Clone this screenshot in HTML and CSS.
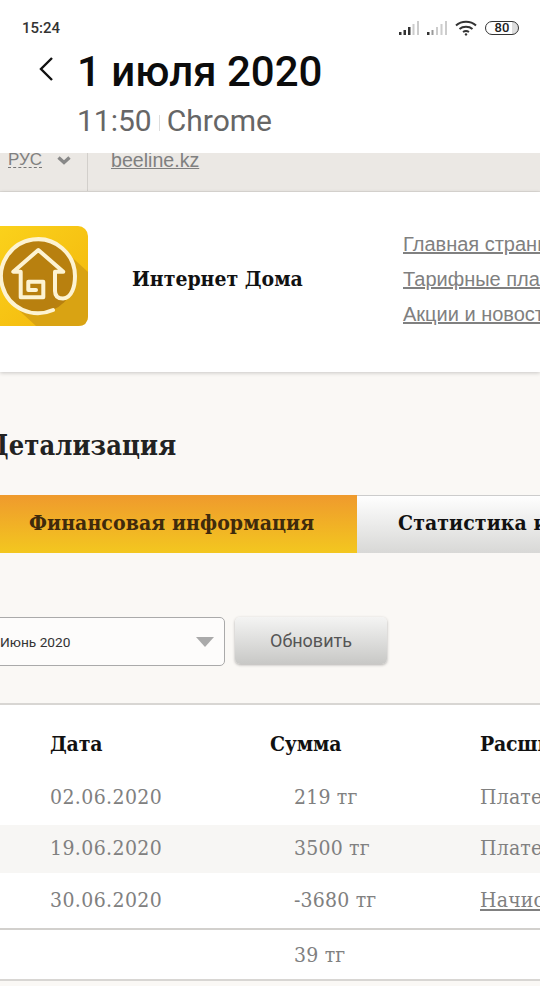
FILE: index.html
```html
<!DOCTYPE html>
<html lang="ru">
<head>
    <meta charset="UTF-8">
    <meta name="viewport" content="width=device-width, initial-scale=1.0">
    <title>Детализация</title>
    <link rel="stylesheet" href="styles.css">
</head>
<body>
    <div class="app-header">
        <div class="status-bar">
            <span class="status-time">15:24</span>
            <div class="status-icons">
                <svg width="20" height="16" viewBox="0 0 20 16"><rect x="0" y="12" width="2.5" height="3" fill="#333"/><rect x="4.5" y="10" width="2.5" height="5" fill="#333"/><rect x="9" y="7" width="2.5" height="8" fill="#333"/><rect x="13.5" y="4" width="2" height="11" fill="#ccc"/><rect x="18" y="1" width="2" height="14" fill="#ccc"/></svg>
                <svg width="20" height="16" viewBox="0 0 20 16"><rect x="0" y="12" width="2.5" height="3" fill="#333"/><rect x="4.5" y="10" width="2" height="5" fill="#999"/><rect x="9" y="7" width="2" height="8" fill="#ccc"/><rect x="13.5" y="4" width="2" height="11" fill="#ccc"/><rect x="18" y="1" width="2" height="14" fill="#ccc"/></svg>
                <svg width="22" height="16" viewBox="0 0 22 16" fill="none" stroke="#333" stroke-width="2"><path d="M1 5.5 C6.5 0.5 15.5 0.5 21 5.5"/><path d="M4.5 9 C8 6 14 6 17.5 9"/><path d="M8 12 C9.8 10.8 12.2 10.8 14 12"/><circle cx="11" cy="14.4" r="1.2" fill="#333" stroke="none"/></svg>
                <span class="battery">80</span>
            </div>
        </div>
        <div class="title-row">
            <svg class="back-icon" width="16" height="26" viewBox="0 0 16 26" fill="none" stroke="#111" stroke-width="2.4"><path d="M14 2 L3 13 L14 24"/></svg>
            <div>
                <h1>1 июля 2020</h1>
                <p class="subtitle">11:50<span class="sep"></span>Chrome</p>
            </div>
        </div>
    </div>

    <div class="top-bar">
        <div class="lang">
            <span class="lang-name">РУС</span>
            <svg width="14" height="9" viewBox="0 0 14 9" fill="none" stroke="#888" stroke-width="3.4"><path d="M1.5 1.5 L7 6.5 L12.5 1.5"/></svg>
        </div>
        <a class="site-link" href="#">beeline.kz</a>
    </div>

    <div class="site-header">
        <svg class="logo" width="100" height="100" viewBox="0 0 100 100">
            <defs>
                <linearGradient id="logoBg" x1="0" y1="0" x2="1" y2="1">
                    <stop offset="0" stop-color="#fbd31c"/>
                    <stop offset="1" stop-color="#f3b60c"/>
                </linearGradient>
            </defs>
            <rect width="100" height="100" rx="10" fill="url(#logoBg)"/>
            <path d="M76 24 L100 46 V90 Q100 100 90 100 H48 L22 76 Z" fill="#d9a313"/>
            <circle cx="50" cy="50" r="37" fill="#b8800f"/>
            <g fill="none" stroke="#fdf3d2" stroke-width="4" stroke-linejoin="round" stroke-linecap="round">
                <path d="M65 84 A37 37 0 1 1 87 50 C87 60 84 72 75 72.5 C70 72.5 67 70 67 65 V45.7 H75.3 L50.3 24 L25.3 45.7 H32.7 V71.3 H55.3 V55.7 H40.3 V64 H48"/>
            </g>
        </svg>
        <div class="site-name">Интернет Дома</div>
        <nav class="site-nav">
            <a href="#">Главная страница</a>
            <a href="#">Тарифные планы</a>
            <a href="#">Акции и новости</a>
        </nav>
    </div>

    <div class="content">
        <h2>Детализация</h2>
        <div class="tabs">
            <div class="tab tab-active">Финансовая информация</div>
            <div class="tab">Статистика использования</div>
        </div>
        <div class="filter">
            <div class="month-select">
                <span>Июнь 2020</span>
                <span class="select-arrow"></span>
            </div>
            <div class="refresh-btn">Обновить</div>
        </div>
    </div>

    <table class="details">
        <thead>
            <tr><th class="col-date">Дата</th><th class="col-sum">Сумма</th><th class="col-desc">Расшифровка</th></tr>
        </thead>
        <tbody>
            <tr><td class="col-date">02.06.2020</td><td class="col-sum amount">219 тг</td><td class="col-desc">Платеж</td></tr>
            <tr class="alt"><td class="col-date">19.06.2020</td><td class="col-sum amount">3500 тг</td><td class="col-desc">Платеж</td></tr>
            <tr><td class="col-date">30.06.2020</td><td class="col-sum amount">-3680 тг</td><td class="col-desc"><a href="#">Начисление</a></td></tr>
        </tbody>
        <tfoot>
            <tr><td class="col-date"></td><td class="col-sum amount">39 тг</td><td class="col-desc"></td></tr>
        </tfoot>
    </table>
</body>
</html>
```

FILE: styles.css
```css
html, body {
    margin: 0;
    padding: 0;
    height: 986px;
    overflow: hidden;
}

body {
    width: 540px;
    background: #faf8f5;
    font-family: "DejaVu Serif Condensed", "DejaVu Serif", serif;
}

.app-header {
    background: #fff;
    height: 153px;
    position: relative;
    z-index: 2;
    font-family: Roboto, sans-serif;
}

.status-bar {
    display: flex;
    justify-content: space-between;
    align-items: center;
    height: 20px;
    padding: 18px 21px 0 22px;
}

.status-time {
    font-size: 15px;
    font-weight: 500;
    color: #333;
}

.status-icons {
    display: flex;
    align-items: center;
    gap: 8px;
}

.battery {
    width: 32px;
    height: 12px;
    border: 1px solid #333;
    border-radius: 7px;
    background: linear-gradient(90deg, #fff 80%, #ddd 80%);
    font-size: 13px;
    font-weight: 500;
    line-height: 12px;
    text-align: center;
    color: #222;
}

.title-row {
    display: flex;
    align-items: flex-start;
    padding: 9px 0 0 38px;
}

.back-icon {
    margin: 9px 23px 0 0;
}

h1 {
    margin: 0;
    font-size: 42px;
    font-weight: 500;
    line-height: 50px;
    color: #0c0c0c;
}

.subtitle {
    margin: 7px 0 0;
    font-size: 30px;
    line-height: 34px;
    color: #666;
}

.sep {
    display: inline-block;
    width: 1px;
    height: 16px;
    margin: 0 7px 0 7px;
    background: #ddd;
}

.top-bar {
    display: flex;
    height: 38px;
    background: #ebe8e4;
    border-bottom: 1px solid #dedbd7;
    font-family: "Liberation Sans", sans-serif;
    color: #808080;
}

.lang {
    display: flex;
    align-items: flex-start;
    gap: 15px;
    width: 79px;
    padding: 0 0 0 8px;
    border-right: 1px solid #d2cfcb;
}

.lang svg {
    margin-top: 3px;
}

.lang-name {
    height: 17px;
    margin-top: -3px;
    font-size: 17px;
    line-height: 19px;
    border-bottom: 1px dashed #777;
}

.site-link {
    margin: -4px 0 0 23px;
    font-size: 19.6px;
    line-height: 22px;
    height: 22px;
    color: #808080;
}

.site-header {
    display: flex;
    align-items: center;
    box-sizing: border-box;
    height: 180px;
    padding-bottom: 12px;
    background: #fff;
    box-shadow: 0 1px 4px rgba(0,0,0,0.2);
    position: relative;
}

.logo {
    flex: none;
    margin-left: -12px;
}

.site-name {
    flex: none;
    width: 271px;
    margin: 4px 0 0 44px;
    font-size: 21px;
    font-weight: bold;
    color: #111;
}

.site-nav {
    flex: none;
    display: flex;
    flex-direction: column;
    gap: 13px;
    margin-top: 6px;
    white-space: nowrap;
    font-family: "Liberation Sans", sans-serif;
    font-size: 20px;
}

.site-nav a {
    color: #808080;
    line-height: 22px;
}

.content {
    height: 331px;
}

h2 {
    margin: 0;
    padding: 54px 0 0;
    margin-left: -13px;
    font-size: 27px;
    font-weight: bold;
    line-height: 40px;
    letter-spacing: 0.1px;
    color: #222;
}

.tabs {
    display: flex;
    height: 58px;
    margin-top: 29px;
    white-space: nowrap;
}

.tab {
    flex: none;
    padding-left: 41px;
    font-size: 21px;
    font-weight: bold;
    line-height: 55px;
    letter-spacing: 0.1px;
    color: #111;
    background: linear-gradient(#fff, #d8d8d6);
    box-shadow: inset 0 1px 0 #ccc;
}

.tab-active {
    width: 357px;
    box-sizing: border-box;
    padding-left: 29px;
    color: #3f2a0c;
    background: linear-gradient(#ef9a2d, #f3c71f);
    box-shadow: none;
}

.filter {
    display: flex;
    gap: 10px;
    margin-top: 64px;
}

.month-select {
    display: flex;
    align-items: center;
    justify-content: space-between;
    box-sizing: border-box;
    width: 235px;
    height: 49px;
    margin-left: -10px;
    padding: 0 10px 0 9px;
    background: #fdfcfb;
    border: 1px solid #aaa;
    border-radius: 5px;
    font-family: Roboto, sans-serif;
    font-size: 13.7px;
    color: #333;
}

.select-arrow {
    width: 0;
    height: 0;
    border-left: 9px solid transparent;
    border-right: 9px solid transparent;
    border-top: 10px solid #aaa;
}

.refresh-btn {
    box-sizing: border-box;
    width: 152px;
    height: 47px;
    background: linear-gradient(#f4f4f3, #c8c8c6);
    border-radius: 5px;
    box-shadow: 0 1px 3px rgba(0,0,0,0.3);
    font-family: Roboto, sans-serif;
    font-size: 18px;
    line-height: 47px;
    text-align: center;
    color: #555;
}

.details {
    width: 740px;
    table-layout: fixed;
    border-collapse: collapse;
    background: #fff;
    border-top: 2px solid #d8d6d3;
    font-size: 21px;
    letter-spacing: 0.2px;
    color: #808080;
}

.details th {
    height: 53px;
    padding: 12px 0 0;
    font-size: 21px;
    line-height: 26px;
    letter-spacing: -0.2px;
    text-align: left;
    color: #111;
}

.details td {
    height: 53px;
    padding: 0 0 2px;
    line-height: 24px;
}

.details tr.alt td {
    height: 46px;
    background: #f7f6f4;
}

.details a {
    color: #808080;
}

.details tfoot td {
    height: 49px;
    padding: 0;
    border-top: 2px solid #d2d0cd;
    border-bottom: 2px solid #d8d6d3;
}

.col-date {
    width: 270px;
    padding-left: 50px !important;
    box-sizing: border-box;
    letter-spacing: 0.4px;
}

.col-sum {
    width: 210px;
}

.amount {
    padding-left: 24px !important;
}
```
